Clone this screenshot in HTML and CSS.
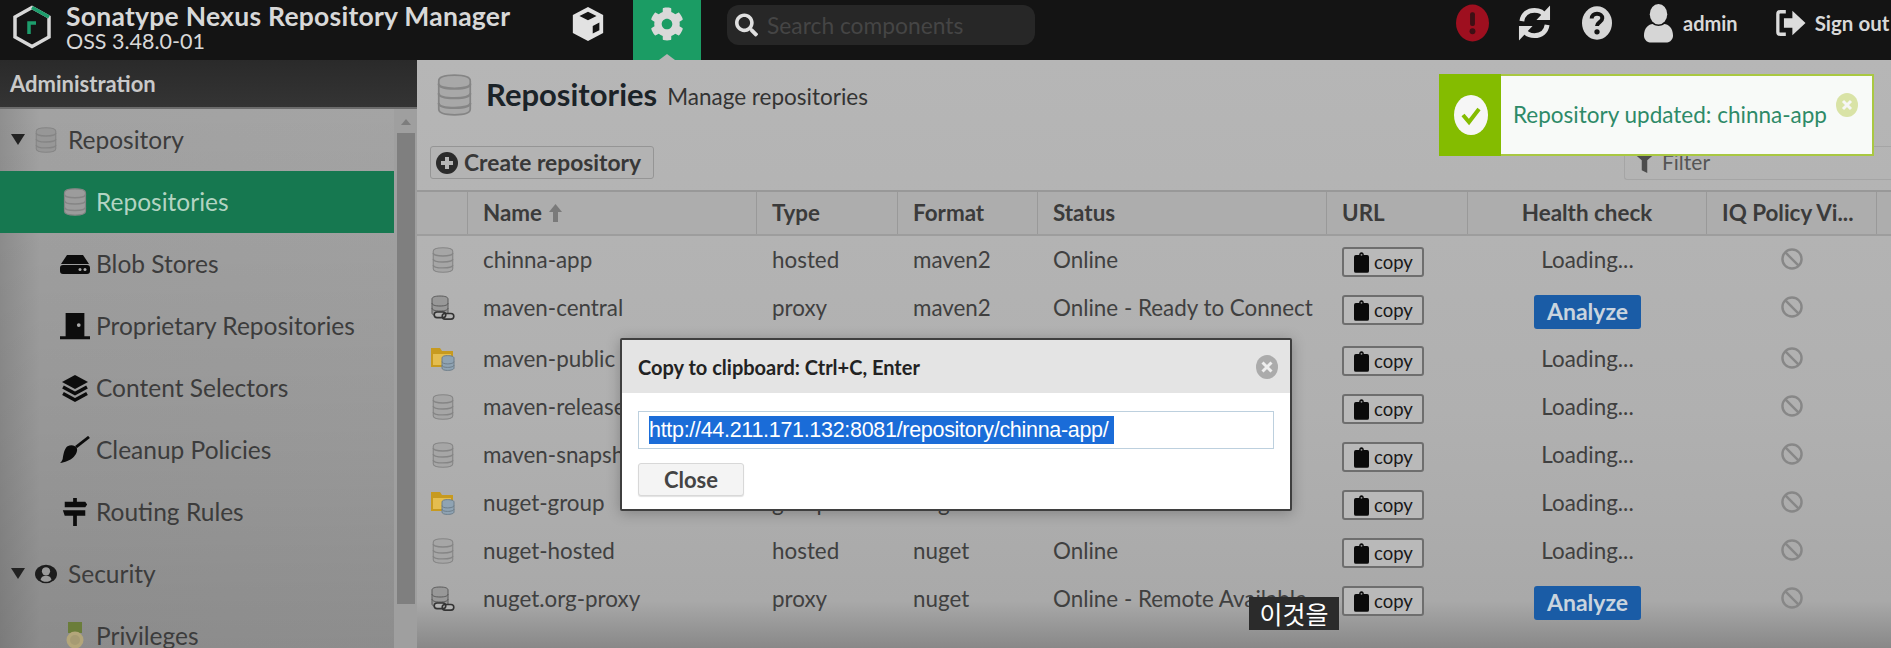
FILE: index.html
```html
<!DOCTYPE html>
<html lang="en">
<head>
<meta charset="utf-8">
<title>Sonatype Nexus Repository Manager</title>
<link rel="stylesheet" href="styles.css">
</head>
<body>
<svg class="defs" width="0" height="0" aria-hidden="true">
  <symbol id="db" viewBox="0 0 20 24">
    <path fill="currentColor" stroke="#858585" stroke-width="1" d="M1 4C1 1.700 5 .7 10 .7s9 1 9 3.300v16c0 2.300-4 3.300-9 3.300s-9-1-9-3.300z"/>
    <path fill="none" stroke="#858585" stroke-width="1.300" d="M1 5.500c0 2 4 2.800 9 2.800s9-.8 9-2.800M1 11c0 2 4 2.800 9 2.800s9-.8 9-2.800M1 16.500c0 2 4 2.800 9 2.800s9-.8 9-2.800"/>
  </symbol>
  <symbol id="dbproxy" viewBox="0 0 24 26">
    <path fill="#989898" stroke="#5a5a5a" d="M1 4C1 2 4 1 9 1s8 1 8 3v14c0 2-3 3-8 3s-8-1-8-3z"/>
    <path fill="none" stroke="#5a5a5a" d="M1 8c0 2 3 3 8 3s8-1 8-3M1 13c0 2 3 3 8 3s8-1 8-3"/>
    <path fill="#b4b4b4" stroke="#333" stroke-width="1.600" d="M6 17h6a2.800 2.800 0 0 1 0 5.600H6a2.800 2.800 0 0 1 0-5.600zM14 18.500h6a2.800 2.800 0 0 1 0 5.600h-6a2.800 2.800 0 0 1 0-5.600z"/>
  </symbol>
  <symbol id="dbfolder" viewBox="0 0 24 26">
    <path fill="#c79a1f" d="M0 2h9l2 3h11v16H0z"/>
    <path fill="#e4bd4f" d="M2 8h18v11H2z"/>
    <path fill="#8fa3b3" stroke="#6e7e8a" d="M11 12c0-1.500 2-2.400 5.500-2.400S23 10.500 23 12v10c0 1.500-3 2.400-6.500 2.400S11 23.500 11 22z"/>
    <path fill="none" stroke="#6e7e8a" d="M11 15.500c0 1.500 2 2.400 5.500 2.400s6.500-.9 6.500-2.400M11 19c0 1.500 2 2.400 5.500 2.400s6.500-.9 6.500-2.400"/>
  </symbol>
  <symbol id="clip" viewBox="0 0 16 22">
    <path fill="#0a0a0a" d="M2 3h3.500c0-1.800 1-3 2.500-3s2.500 1.200 2.500 3H14a2 2 0 0 1 2 2v15a2 2 0 0 1-2 2H2a2 2 0 0 1-2-2V5a2 2 0 0 1 2-2z"/>
    <circle cx="8" cy="2.800" r="1" fill="#999"/>
  </symbol>
  <symbol id="ban" viewBox="0 0 20 20">
    <circle cx="10" cy="10" r="8.700" fill="none" stroke="#878787" stroke-width="2.200"/>
    <path d="M4 4l12 12" stroke="#878787" stroke-width="2.200"/>
  </symbol>
</svg>

<div class="app">
  <header class="topbar">
    <div class="brand">
      <svg class="logo" viewBox="0 0 40 44" aria-hidden="true">
        <path fill="none" stroke="#d8d8d8" stroke-width="3.500" d="M20 2.500 37 12v20L20 41.500 3 32V12z"/>
        <path fill="none" stroke="#1d9d6c" stroke-width="3.500" d="M20 2.500 37 12"/>
        <path fill="none" stroke="#1d9d6c" stroke-width="3.500" d="M17 29V18h7"/>
      </svg>
      <div class="brand-text">
        <div class="brand-name">Sonatype Nexus Repository Manager</div>
        <div class="brand-ver">OSS 3.48.0-01</div>
      </div>
    </div>
    <div class="mode">
      <svg class="cube" viewBox="0 0 34 38" aria-hidden="true">
        <path fill="#e2e2e2" d="M17 1 33 9.500v19L17 37 1 28.500v-19z"/>
        <path fill="#141414" d="M17 6l9 4.500-9 4.500-9-4.500zM22 21l7-3.500v8L22 29z"/>
      </svg>
    </div>
    <div class="mode active">
      <svg class="gear" viewBox="0 0 512 512" aria-hidden="true"><path fill="#d9d9d9" d="M487.4 315.7l-42.6-24.600c4.300-23.200 4.300-47 0-70.200l42.600-24.600c4.900-2.800 7.100-8.600 5.500-14-11.100-35.600-30-67.800-54.700-94.600-3.800-4.100-10-5.100-14.800-2.300L380.800 110c-17.900-15.400-38.500-27.300-60.800-35.100V25.800c0-5.600-3.900-10.500-9.400-11.700-36.700-8.200-74.300-7.800-109.200 0-5.500 1.200-9.400 6.100-9.400 11.700V75c-22.200 7.900-42.800 19.800-60.800 35.100L88.700 85.500c-4.900-2.800-11-1.900-14.800 2.300-24.700 26.700-43.600 58.900-54.700 94.600-1.700 5.400.6 11.200 5.500 14L67.300 221c-4.300 23.200-4.300 47 0 70.200l-42.600 24.600c-4.900 2.800-7.100 8.600-5.500 14 11.100 35.600 30 67.800 54.700 94.600 3.800 4.100 10 5.100 14.800 2.300l42.600-24.600c17.900 15.400 38.500 27.300 60.800 35.100v49.200c0 5.600 3.900 10.500 9.400 11.700 36.700 8.200 74.300 7.800 109.200 0 5.500-1.200 9.400-6.100 9.400-11.700v-49.200c22.200-7.900 42.800-19.800 60.800-35.100l42.600 24.600c4.900 2.800 11 1.900 14.800-2.300 24.700-26.700 43.600-58.900 54.700-94.600 1.500-5.500-.7-11.300-5.600-14.100zM256 336c-44.100 0-80-35.900-80-80s35.900-80 80-80 80 35.900 80 80-35.900 80-80 80z"/></svg>
      <span class="notch"></span>
    </div>
    <div class="search">
      <svg class="search-icon" viewBox="0 0 512 512" aria-hidden="true"><path fill="#e0e0e0" d="M505 442.700L405.300 343c-4.500-4.500-10.600-7-17-7H372c27.600-35.300 44-79.700 44-128C416 93.100 322.900 0 208 0S0 93.100 0 208s93.100 208 208 208c48.300 0 92.700-16.400 128-44v16.300c0 6.400 2.500 12.500 7 17l99.700 99.700c9.400 9.400 24.600 9.400 33.900 0l28.300-28.300c9.400-9.400 9.400-24.600.1-34zM208 336c-70.700 0-128-57.200-128-128 0-70.700 57.200-128 128-128 70.700 0 128 57.200 128 128 0 70.700-57.200 128-128 128z"/></svg>
      <span class="search-text">Search components</span>
    </div>
    <div class="top-right">
      <svg class="t-err" viewBox="0 0 34 38" aria-hidden="true"><ellipse cx="17" cy="19" rx="17" ry="19" fill="#9e0f1f"/><rect x="14.500" y="8" width="5" height="14" rx="2" fill="#3d1015"/><circle cx="17" cy="27.500" r="3" fill="#3d1015"/></svg>
      <svg class="t-ref" viewBox="0 0 34 38" aria-hidden="true"><path fill="none" stroke="#dcdcdc" stroke-width="5" d="M4 17C5 10 10 6 17 6c5 0 9 2 11 6M30 21c-1 7-6 11-13 11-5 0-9-2-11-6"/><path fill="#dcdcdc" d="M33 1v15H19zM1 37V22h14z"/></svg>
      <svg class="t-help" viewBox="0 0 34 38" aria-hidden="true"><ellipse cx="17" cy="19" rx="17" ry="19" fill="#d6d6d6"/><path fill="none" stroke="#141414" stroke-width="4.500" d="M11 14c0-3.500 2.500-5.500 6-5.500s6 2 6 5c0 4.500-6 4.500-6 9"/><circle cx="17" cy="29" r="3" fill="#141414"/></svg>
      <svg class="t-user" viewBox="0 0 32 40" aria-hidden="true"><ellipse cx="16" cy="11" rx="9" ry="10.500" fill="#d6d6d6"/><path fill="#d6d6d6" d="M1 33c0-8 5-12 9-12 2 1.500 4 2 6 2s4-.5 6-2c4 0 9 4 9 12 0 4-3 7-6 7H7c-3 0-6-3-6-7z"/></svg>
      <span class="t-admin">admin</span>
      <svg class="t-out" viewBox="0 0 32 32" aria-hidden="true"><path fill="none" stroke="#dcdcdc" stroke-width="3.500" d="M11 4H5a2.500 2.500 0 0 0-2.500 2.500v19A2.500 2.500 0 0 0 5 28h6"/><path fill="#dcdcdc" d="M9 11h9V3l14 13-14 13v-8H9z"/></svg>
      <span class="t-sign">Sign out</span>
    </div>
  </header>

  <div class="main">
    <aside class="sidebar">
      <div class="side-head">Administration</div>
      <div class="side-body">
        <nav class="tree">
          <div class="node"><span class="caret"></span><svg class="ico-top"><use href="#db"/></svg><span>Repository</span></div>
          <div class="node sub on"><svg class="ico-sub db-on"><use href="#db"/></svg><span>Repositories</span></div>
          <div class="node sub">
            <svg class="ico-sub" viewBox="0 0 30 20" aria-hidden="true"><path fill="#0c0c0c" d="M7 1h16l6 9H1zM3 11h24a3 3 0 0 1 3 3v3a3 3 0 0 1-3 3H3a3 3 0 0 1-3-3v-3a3 3 0 0 1 3-3z"/><circle cx="20" cy="15.500" r="1.500" fill="#aaa"/><circle cx="25" cy="15.500" r="1.500" fill="#aaa"/></svg>
            <span>Blob Stores</span></div>
          <div class="node sub">
            <svg class="ico-sub" viewBox="0 0 32 28" aria-hidden="true"><path fill="#0c0c0c" d="M6 0h20v25h6v3H0v-3h6z"/><circle cx="20" cy="13" r="2" fill="#aaa"/></svg>
            <span>Proprietary Repositories</span></div>
          <div class="node sub">
            <svg class="ico-sub" viewBox="0 0 28 28" aria-hidden="true"><path fill="#0c0c0c" d="M14 1l13 7-13 7L1 8z"/><path fill="none" stroke="#0c0c0c" stroke-width="3.500" d="M2 13l12 6.500L26 13M2 19.500l12 6.500 12-6.500"/></svg>
            <span>Content Selectors</span></div>
          <div class="node sub">
            <svg class="ico-sub" viewBox="0 0 32 30" aria-hidden="true"><path fill="#0c0c0c" d="M8 11c4-2 8-1 10 2 1 3-1 7-4 10-3 3-9 5-14 6 2-2 3-4 3-6 1-5 2-10 5-12z"/><path stroke="#0c0c0c" stroke-width="3" d="M17 12 31 1"/></svg>
            <span>Cleanup Policies</span></div>
          <div class="node sub">
            <svg class="ico-sub" viewBox="0 0 26 30" aria-hidden="true"><path fill="#0c0c0c" d="M11 0h4v4h9l2 3-2 3H2V4h9zM0 13h24v6H15v11h-4V19H2z"/></svg>
            <span>Routing Rules</span></div>
          <div class="node"><span class="caret"></span>
            <svg class="ico-top" viewBox="0 0 24 24" aria-hidden="true"><ellipse cx="12" cy="12" rx="12" ry="10" fill="#1d1d1d"/><circle cx="12" cy="9" r="4.500" fill="#9a9a9a"/><path fill="#9a9a9a" d="M6 18c1-3 3-4 6-4s5 1 6 4c-2 2-3 2.500-6 2.500s-4-.5-6-2.500z"/></svg>
            <span>Security</span></div>
          <div class="node sub">
            <svg class="ico-sub" viewBox="0 0 18 28" aria-hidden="true"><rect x="2" y="0" width="14" height="11" fill="#6b7d3a"/><circle cx="9" cy="18" r="8.500" fill="#b3a67a"/><circle cx="9" cy="18" r="5" fill="#a69b73"/></svg>
            <span>Privileges</span></div>
        </nav>
        <div class="scroll">
          <span class="scroll-up"></span>
          <span class="scroll-thumb"></span>
        </div>
      </div>
    </aside>

    <section class="content">
      <div class="page-head">
        <svg class="page-icon"><use href="#db"/></svg>
        <h1>Repositories</h1>
        <span class="page-sub">Manage repositories</span>
      </div>
      <div class="toolbar">
        <button class="create" type="button">
          <svg viewBox="0 0 22 22" aria-hidden="true"><circle cx="11" cy="11" r="11" fill="#2b2b2b"/><path fill="#b5b5b5" d="M9 5h4v4h4v4h-4v4H9v-4H5V9h4z"/></svg>
          <span class="create-label">Create repository</span>
        </button>
        <div class="filter">
          <svg viewBox="0 0 18 24" aria-hidden="true"><path fill="#4c4c4c" d="M0 1h18v4l-6 5v14l-6-3V10L0 5z"/></svg>
          <span>Filter</span>
        </div>
      </div>
      <div class="grid">
        <div class="row head">
          <div class="c"></div>
          <div class="c name-head">Name <svg class="sort" viewBox="0 0 13 18" aria-hidden="true"><path fill="#7a7a7a" d="M6.500 0 13 8H9v10H4V8H0z"/></svg></div>
          <div class="c">Type</div>
          <div class="c">Format</div>
          <div class="c">Status</div>
          <div class="c">URL</div>
          <div class="c center">Health check</div>
          <div class="c">IQ Policy Vi...</div>
        </div>
        <div class="row">
          <div class="c"><svg class="r-ico db-row"><use href="#db"/></svg></div>
          <div class="c">chinna-app</div><div class="c">hosted</div><div class="c">maven2</div><div class="c">Online</div>
          <div class="c"><span class="copy"><svg><use href="#clip"/></svg>copy</span></div>
          <div class="c center">Loading...</div>
          <div class="c"><svg class="no"><use href="#ban"/></svg></div>
        </div>
        <div class="row">
          <div class="c"><svg class="r-ico"><use href="#dbproxy"/></svg></div>
          <div class="c">maven-central</div><div class="c">proxy</div><div class="c">maven2</div><div class="c">Online - Ready to Connect</div>
          <div class="c"><span class="copy"><svg><use href="#clip"/></svg>copy</span></div>
          <div class="c center"><span class="analyze">Analyze</span></div>
          <div class="c"><svg class="no"><use href="#ban"/></svg></div>
        </div>
        <div class="row">
          <div class="c"><svg class="r-ico"><use href="#dbfolder"/></svg></div>
          <div class="c">maven-public</div><div class="c">group</div><div class="c">maven2</div><div class="c">Online</div>
          <div class="c"><span class="copy"><svg><use href="#clip"/></svg>copy</span></div>
          <div class="c center">Loading...</div>
          <div class="c"><svg class="no"><use href="#ban"/></svg></div>
        </div>
        <div class="row">
          <div class="c"><svg class="r-ico db-row"><use href="#db"/></svg></div>
          <div class="c">maven-releases</div><div class="c">hosted</div><div class="c">maven2</div><div class="c">Online</div>
          <div class="c"><span class="copy"><svg><use href="#clip"/></svg>copy</span></div>
          <div class="c center">Loading...</div>
          <div class="c"><svg class="no"><use href="#ban"/></svg></div>
        </div>
        <div class="row">
          <div class="c"><svg class="r-ico db-row"><use href="#db"/></svg></div>
          <div class="c">maven-snapshots</div><div class="c">hosted</div><div class="c">maven2</div><div class="c">Online</div>
          <div class="c"><span class="copy"><svg><use href="#clip"/></svg>copy</span></div>
          <div class="c center">Loading...</div>
          <div class="c"><svg class="no"><use href="#ban"/></svg></div>
        </div>
        <div class="row">
          <div class="c"><svg class="r-ico"><use href="#dbfolder"/></svg></div>
          <div class="c">nuget-group</div><div class="c">group</div><div class="c">nuget</div><div class="c">Online</div>
          <div class="c"><span class="copy"><svg><use href="#clip"/></svg>copy</span></div>
          <div class="c center">Loading...</div>
          <div class="c"><svg class="no"><use href="#ban"/></svg></div>
        </div>
        <div class="row">
          <div class="c"><svg class="r-ico db-row"><use href="#db"/></svg></div>
          <div class="c">nuget-hosted</div><div class="c">hosted</div><div class="c">nuget</div><div class="c">Online</div>
          <div class="c"><span class="copy"><svg><use href="#clip"/></svg>copy</span></div>
          <div class="c center">Loading...</div>
          <div class="c"><svg class="no"><use href="#ban"/></svg></div>
        </div>
        <div class="row">
          <div class="c"><svg class="r-ico"><use href="#dbproxy"/></svg></div>
          <div class="c">nuget.org-proxy</div><div class="c">proxy</div><div class="c">nuget</div><div class="c">Online - Remote Available</div>
          <div class="c"><span class="copy"><svg><use href="#clip"/></svg>copy</span></div>
          <div class="c center"><span class="analyze">Analyze</span></div>
          <div class="c"><svg class="no"><use href="#ban"/></svg></div>
        </div>
      </div>
    </section>
  </div>

  <div class="toast">
    <div class="toast-side">
      <svg viewBox="0 0 34 40" aria-hidden="true"><ellipse cx="17" cy="20" rx="17" ry="20" fill="#f6f6f6"/><path fill="none" stroke="#84bc00" stroke-width="4" d="M9 20l6 7 10-13"/></svg>
    </div>
    <div class="toast-text">Repository updated: chinna-app</div>
    <svg class="toast-x" viewBox="0 0 22 24" aria-hidden="true"><ellipse cx="11" cy="12" rx="11" ry="12" fill="#d9e3a6"/><path stroke="#f6f6f6" stroke-width="3" d="M7 8l8 8M15 8l-8 8"/></svg>
  </div>

  <div class="dialog">
    <div class="dialog-head">
      <span>Copy to clipboard: Ctrl+C, Enter</span>
      <svg viewBox="0 0 22 24" aria-hidden="true"><ellipse cx="11" cy="12" rx="11" ry="12" fill="#ababab"/><path stroke="#eee" stroke-width="3" d="M6.500 7.500l9 9M15.500 7.500l-9 9"/></svg>
    </div>
    <div class="dialog-body">
      <div class="url-box"><span class="url-sel">http://44.211.171.132:8081/repository/chinna-app/</span></div>
      <button class="close" type="button">Close</button>
    </div>
  </div>

  <div class="caption">이것을</div>
</div>
</body>
</html>
```
FILE: styles.css
```css
* { box-sizing: border-box; }
html, body { margin: 0; height: 100%; overflow: hidden; }
body { font-family: Lato, "Open Sans", sans-serif; color: #3a3a3a; background: #aaa; }
.defs { position: absolute; }
svg { display: block; }

.app { position: relative; width: 1891px; height: 648px; display: flex; flex-direction: column; overflow: hidden; }

/* top bar */
.topbar { height: 60px; flex: none; background: #141414; display: flex; align-items: flex-start; }
.brand { width: 545px; display: flex; padding: 0 0 0 12px; gap: 14px; }
.logo { width: 40px; height: 44px; margin-top: 5px; }
.brand-text { color: #d8d8d8; padding-top: 1px; }
.brand-name { font-size: 26.500px; font-weight: 700; line-height: 30px; white-space: nowrap; letter-spacing: .25px; }
.brand-ver { font-size: 21.500px; line-height: 20px; white-space: nowrap; }
.mode { width: 86px; height: 60px; display: flex; justify-content: center; padding-top: 6px; position: relative; }
.mode.active { width: 68px; margin-left: 2px; background: #1b9c64; }
.cube { width: 36px; height: 36px; }
.gear { width: 34px; height: 36px; }
.notch { position: absolute; left: 26px; bottom: 0; border: 8px solid transparent; border-top: 0; border-bottom: 6px solid #b5b5b5; }
.search { margin: 5px 0 0 26px; width: 308px; height: 40px; border-radius: 12px; background: #272727; display: flex; align-items: center; padding-left: 8px; gap: 9px; }
.search-icon { width: 23px; height: 26px; }
.search-text { font-size: 22.800px; color: #454545; white-space: nowrap; }
.top-right { position: relative; flex: 1; display: flex; align-items: center; height: 46px; padding-left: 421px; color: #d8d8d8; font-weight: 700; font-size: 20px; }
.t-err, .t-ref { width: 33px; height: 38px; flex: none; }
.t-help { width: 30px; height: 38px; flex: none; }
.t-ref { margin-left: 29px; }
.t-help { margin-left: 31px; }
.t-user { width: 31px; height: 40px; flex: none; margin-left: 31px; }
.t-admin { margin-left: 9px; }
.t-out { width: 31px; height: 30px; flex: none; margin-left: 37px; }
.t-sign { margin-left: 9px; white-space: nowrap; font-size: 20.500px; }

/* layout */
.main { flex: 1; display: flex; min-height: 0; }

/* sidebar */
.sidebar { width: 417px; flex: none; display: flex; flex-direction: column; background: linear-gradient(90deg, #8f8f8f 0, #a2a2a2 40px, #a4a4a4 100%); }
.side-head { height: 49px; flex: none; padding-left: 10px; line-height: 47px; font-size: 22px; font-weight: 700; color: #c9c9c9; background: linear-gradient(#2a2a2a, #343434); border-bottom: 2px solid #6c6c6c; }
.side-body { flex: 1; display: flex; min-height: 0; background: linear-gradient(rgba(0,0,0,0) 0, rgba(0,0,0,.07) 60%, rgba(0,0,0,.14) 100%); }
.tree { width: 394px; flex: none; }
.node { height: 62px; display: flex; align-items: center; font-size: 24.500px; line-height: 28px; color: #3c3c3c; padding: 0 0 1px 11px; white-space: nowrap; }
.sub { padding-left: 60px; }
.sub > svg { margin-right: 6px; }
.sub.on { background: #167850; color: #b3d4c2; }
.caret { width: 0; height: 0; border: 7px solid transparent; border-top: 11px solid #222; border-bottom: 0; margin-right: 10px; }
.ico-top { width: 22px; height: 26px; margin-right: 11px; color: #979797; }
.ico-sub { width: 30px; height: 28px; color: #a8a8a8; }
.db-on { color: #9c9c9c; }
.scroll { width: 23px; flex: none; display: flex; flex-direction: column; align-items: center; background: #9f9f9f; }
.scroll-up { margin-top: 10px; width: 0; height: 0; border: 5px solid transparent; border-top: 0; border-bottom: 6px solid #7d7d7d; }
.scroll-thumb { margin-top: 8px; width: 18px; height: 471px; background: #7f7f7f; }

/* content */
.content { flex: 1; min-width: 0; background: linear-gradient(#b6b6b6 0, #b0b0b0 60%, #a9a9a9 92%, #888 100%); }
.page-head { height: 86px; display: flex; align-items: flex-start; padding: 14px 0 0 20px; }
.page-icon { width: 35px; height: 42px; color: #a8a8a8; margin-right: 14px; }
h1 { margin: 0 10px 0 0; font-size: 31px; line-height: 40px; font-weight: 700; color: #1b2328; }
.page-sub { font-size: 22.500px; line-height: 46px; color: #333; }
.toolbar { height: 44px; display: flex; align-items: flex-start; justify-content: space-between; padding-left: 13px; }
.create { height: 33px; width: 224px; padding: 0 0 0 5px; display: flex; align-items: center; gap: 6px; font: 700 22.800px Lato, sans-serif; color: #383838; background: #b3b3b3; border: 1px solid #959595; border-radius: 3px; white-space: nowrap; }
.create-label { margin-top: -2px; }
.create svg { width: 22px; height: 22px; }
.filter { width: 267px; height: 34px; border: 1px solid #a5a5a5; border-right: 0; border-radius: 3px 0 0 3px; display: flex; align-items: center; gap: 9px; padding: 0 0 3px 11px; font-size: 21px; color: #555; }
.filter svg { width: 17px; height: 22px; }

.row { display: grid; grid-template-columns: 51px 289px 141px 140px 289px 141px 239px 170px 14px; min-height: 48px; font-size: 22.400px; }
.c { padding: 11px 0 6px 15px; line-height: 25px; white-space: nowrap; overflow: hidden; color: #404040; }
.center { padding-left: 0; text-align: center; }
.head { height: 46px; min-height: 46px; border-top: 2px solid #989898; border-bottom: 2px solid #9d9d9d; background: #adadad; font-weight: 700; }
.head .c { padding-top: 8px; border-right: 1px solid #999; color: #3b3b3b; }
.name-head { display: flex; gap: 7px; }
.sort { width: 13px; height: 18px; margin-top: 4px; flex: none; }
.r-ico { width: 24px; height: 26px; margin-top: 0; margin-left: -1px; }
.db-row { color: #a6a6a6; }
.copy { display: flex; align-items: center; gap: 5px; width: 82px; height: 30px; padding-left: 10px; border: 2px solid #6e6e6e; border-radius: 3px; background: #b9b9b9; color: #181818; font-size: 18.500px; line-height: 24px; }
.copy svg { width: 15px; height: 21px; }
.analyze { display: block; margin: 0 auto; width: 107px; height: 34px; line-height: 32px; border-radius: 3px; background: #1a5ca6; color: #c9d4de; font-weight: 700; font-size: 23px; }
.no { width: 22px; height: 22px; margin: 1px 0 0 59px; }

/* overlays */
.toast { position: absolute; left: 1439px; top: 74px; width: 435px; height: 82px; display: flex; background: #f8faf8; border: 2px solid #a9c842; }
.toast-side { width: 62px; background: #84bc00; margin: -2px 0 -2px -2px; display: flex; align-items: center; padding-left: 15px; }
.toast-side svg { width: 34px; height: 40px; }
.toast-text { margin-left: 12px; font-size: 22.500px; line-height: 78px; color: #2e8a68; white-space: nowrap; }
.toast-x { position: absolute; right: 14px; top: 17px; width: 22px; height: 24px; }

.dialog { position: absolute; left: 620px; top: 338px; width: 672px; height: 173px; background: #fff; border: 2px solid #3f3f3f; border-radius: 2px; box-shadow: 0 2px 14px rgba(0,0,0,.25); }
.dialog-head { height: 53px; background: #e4e4e4; display: flex; align-items: center; justify-content: space-between; padding: 0 12px 0 16px; font-size: 20px; font-weight: 700; color: #222; }
.dialog-head svg { width: 22px; height: 24px; }
.dialog-body { padding: 18px 16px 0 16px; }
.url-box { height: 38px; border: 1px solid #bdd0de; padding: 4px 0 0 10px; }
.url-sel { display: block; width: 465px; height: 28px; background: #1a6cd8; color: #fff; font: 21.500px/28px "Liberation Sans", Arial, sans-serif; letter-spacing: -.3px; white-space: nowrap; overflow: hidden; }
.close { display: block; margin-top: 14px; width: 106px; height: 33px; border: 1px solid #d8d8d8; border-radius: 3px; background: #f4f4f4; font: 700 22px Lato, sans-serif; color: #444; box-shadow: 0 1px 1px rgba(0,0,0,.12); }

.caption { position: absolute; left: 1249px; top: 597px; width: 90px; height: 33px; background: #2b2b2b; color: #fff; font: 25px/33px "Noto Sans CJK KR", sans-serif; text-align: center; }
```
